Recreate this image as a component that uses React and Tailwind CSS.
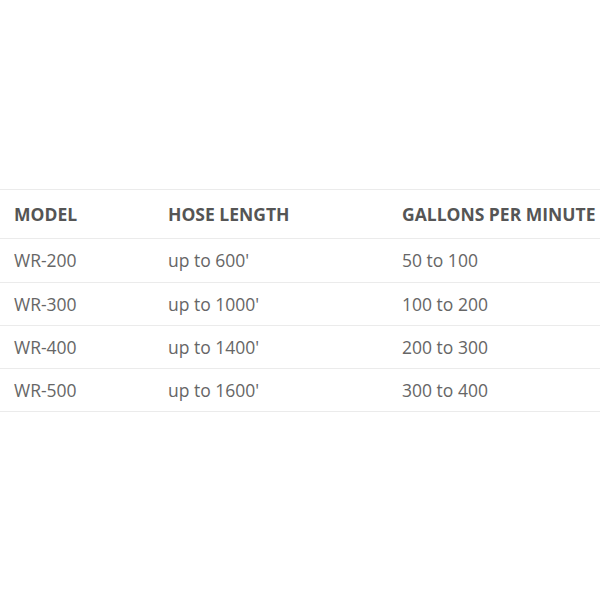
const rows = [
  ["WR-200", "up to 600'", "50 to 100"],
  ["WR-300", "up to 1000'", "100 to 200"],
  ["WR-400", "up to 1400'", "200 to 300"],
  ["WR-500", "up to 1600'", "300 to 400"],
];

export default function App() {
  return (
    <div className="w-[600px] h-[600px] bg-white overflow-hidden font-['Open_Sans',sans-serif]">
      <table className="mt-[189px] w-full table-fixed border-collapse text-[17.5px]">
        <colgroup>
          <col className="w-[168px]" />
          <col className="w-[234px]" />
          <col />
        </colgroup>
        <thead>
          <tr className="border-y border-[#ebebeb] h-[49px]">
            <th className="pl-[14px] text-left font-bold text-[#555555]">MODEL</th>
            <th className="text-left font-bold text-[#555555]">HOSE LENGTH</th>
            <th className="text-left font-bold text-[#555555] whitespace-nowrap">GALLONS PER MINUTE</th>
          </tr>
        </thead>
        <tbody>
          {rows.map((r, i) => (
            <tr key={r[0]} className={`border-b border-[#ebebeb] ${i === 0 ? "h-[44px]" : "h-[43px]"}`}>
              <td className="pl-[14px] text-[#666666]">{r[0]}</td>
              <td className="text-[#666666]">{r[1]}</td>
              <td className="text-[#666666]">{r[2]}</td>
            </tr>
          ))}
        </tbody>
      </table>
    </div>
  );
}
